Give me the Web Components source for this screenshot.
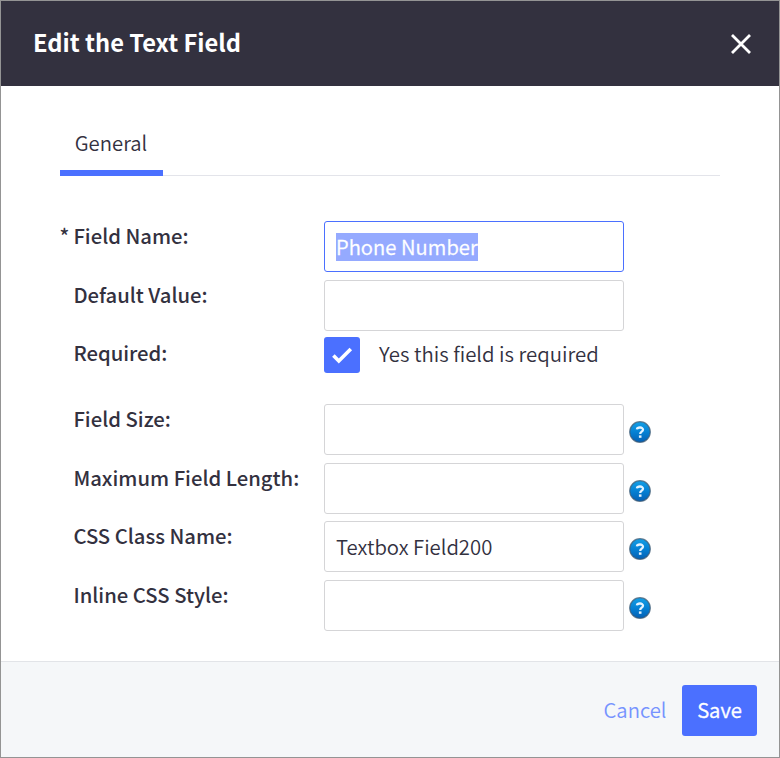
<!DOCTYPE html>
<html lang="en">
<head>
<meta charset="utf-8">
<title>Edit the Text Field</title>
<style>
html, body { margin: 0; height: 100%; }
body { font-family: "Noto Sans CJK SC", "Noto Sans", sans-serif; color: #33313f; background: #fff; }
</style>
</head>
<body>
<edit-dialog></edit-dialog>
<script>
const define = (name, html) => customElements.define(name, class extends HTMLElement {
  constructor() {
    super();
    this.attachShadow({ mode: 'open' }).innerHTML = html;
  }
});

define('close-icon', `
<style>:host{display:block;width:20px;height:20px} svg{display:block}</style>
<svg width="20" height="20" viewBox="0 0 20 20"><path d="M1 1L19 19M19 1L1 19" stroke="#fff" stroke-width="2.8" fill="none"/></svg>`);

define('dialog-header', `
<style>
:host{display:flex;height:85px;box-sizing:border-box;background:#33313f;color:#fff;padding:0 28px 0 32px;align-items:center;justify-content:space-between}
h1{margin:0 0 4px;font-size:23.7px;line-height:34px;font-weight:700;white-space:nowrap}
close-icon{margin-top:1px}
</style>
<h1><slot></slot></h1><close-icon></close-icon>`);

define('tab-bar', `
<style>
:host{display:flex;height:61px;box-sizing:border-box;border-bottom:1px solid #e3e4ea;align-items:flex-start}
.tab{width:103px;height:61px;box-sizing:border-box;border-bottom:6px solid #4b70ff;text-align:center;font-size:20.3px;line-height:54px;font-weight:350;padding-right:1px}
</style>
<div class="tab"><slot></slot></div>`);

define('form-row', `
<style>
:host{display:grid;grid-template-columns:13.4px 250.6px 300px auto;align-items:start;height:58.6px}
.mark,.label{font-size:20.25px;line-height:30px;font-weight:500;white-space:nowrap}
.mark{margin-left:-.5px}
</style>
<span class="mark"><slot name="mark"></slot></span><span class="label"><slot name="label"></slot></span><slot></slot>`);

define('text-field', `
<style>
:host{display:flex;align-items:center;box-sizing:border-box;width:300px;height:51px;border:1px solid #d5d5d7;border-radius:3px;padding-left:11px;background:#fff}
:host([active]){border-color:#4b70ff}
span{font-size:20.3px;line-height:26px;padding-bottom:2px;white-space:nowrap;font-weight:350}
:host([active]) span{background:#95aaff;color:#fff;font-size:20.2px;line-height:28px;padding-bottom:0;letter-spacing:.05px;-webkit-text-stroke:.3px #fff}
</style>
<span><slot></slot></span>`);

define('check-field', `
<style>
:host{display:flex;align-items:center;height:36px;margin-top:-1px;gap:19px;font-size:20.4px;line-height:32px;white-space:nowrap;font-weight:350}
.box{width:36px;height:36px;border-radius:3px;background:#4b70ff;flex:none}
.text{margin-bottom:4px}
svg{display:block}
</style>
<div class="box"><svg width="36" height="36" viewBox="0 0 36 36"><path d="M9.4 18.6L14.8 24L26.8 12" fill="none" stroke="#fff" stroke-width="3.6"/></svg></div><span class="text"><slot></slot></span>`);

define('help-icon', `
<style>:host{display:block;width:24px;height:24px;margin:16px 0 0 4px} svg{display:block}</style>
<svg width="24" height="24" viewBox="0 0 24 24">
<defs><linearGradient id="g" x1="0" y1="0" x2="0" y2="1"><stop offset="0" stop-color="#14a0e6"/><stop offset=".5" stop-color="#0581d4"/><stop offset="1" stop-color="#0560b4"/></linearGradient></defs>
<circle cx="12" cy="12" r="10.3" fill="url(#g)" stroke="#3c5872" stroke-opacity=".75" stroke-width="1.2"/>
<path d="M8.9 9.4C9.3 6.9 15.1 6.7 15 9.8C14.9 11.7 12.2 11.7 12.2 14" fill="none" stroke="#e4f3ff" stroke-width="2.3"/>
<rect x="10.9" y="15.4" width="2.6" height="2.4" fill="#e4f3ff"/></svg>`);

define('dialog-footer', `
<style>
:host{display:flex;height:96px;box-sizing:border-box;border-top:1px solid #e2e4e8;background:#f5f7f9;padding:23px 22px 0 0;align-items:flex-start;justify-content:flex-end;gap:15.5px}
</style><slot></slot>`);

define('action-button', `
<style>
:host{display:block;font-size:20.3px;line-height:49px;color:#7693ff;white-space:nowrap;font-weight:350}
:host([primary]){width:75px;height:51px;border-radius:3px;text-align:center;background:#4b70ff;color:#fff;-webkit-text-stroke:.35px #fff}
</style><slot></slot>`);

define('edit-dialog', `
<style>
:host{display:flex;flex-direction:column;width:780px;height:758px;box-sizing:border-box;border:1px solid #949494;background:#fff}
main{flex:1;padding:29px 59px 0}
.form{padding-top:45px}
.gap{height:66px}
</style>
<dialog-header>Edit the Text Field</dialog-header>
<main>
<tab-bar>General</tab-bar>
<div class="form">
<form-row><span slot="mark">*</span><span slot="label">Field Name:</span><text-field active>Phone Number</text-field></form-row>
<form-row><span slot="label">Default Value:</span><text-field></text-field></form-row>
<form-row class="gap"><span slot="label">Required:</span><check-field>Yes this field is required</check-field></form-row>
<form-row><span slot="label">Field Size:</span><text-field></text-field><help-icon></help-icon></form-row>
<form-row><span slot="label">Maximum Field Length:</span><text-field></text-field><help-icon></help-icon></form-row>
<form-row><span slot="label">CSS Class Name:</span><text-field>Textbox Field200</text-field><help-icon></help-icon></form-row>
<form-row><span slot="label">Inline CSS Style:</span><text-field></text-field><help-icon></help-icon></form-row>
</div>
</main>
<dialog-footer><action-button>Cancel</action-button><action-button primary>Save</action-button></dialog-footer>`);
</script>
</body>
</html>
